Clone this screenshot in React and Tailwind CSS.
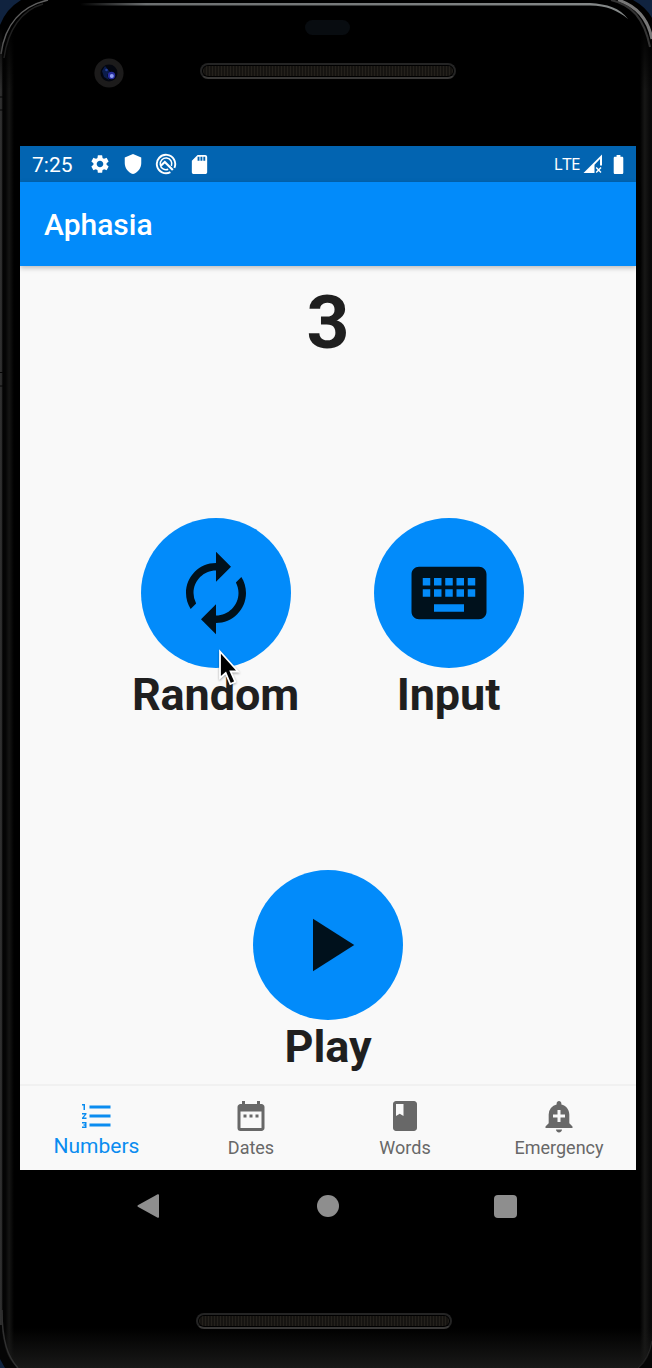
import React from "react";
import {
  MdSettings,
  MdShield,
  MdSdCard,
  MdBatteryFull,
  MdAutorenew,
  MdKeyboard,
  MdPlayArrow,
  MdFormatListNumbered,
  MdDateRange,
  MdBook,
  MdAddAlert,
} from "react-icons/md";

function Speaker() {
  return (
    <div className="h-4 w-[256px] rounded-full border-2 border-[#242424] border-b-[#3a3938] bg-black p-px">
      <div className="h-full w-full rounded-full bg-[repeating-linear-gradient(90deg,#24211c_0px,#24211c_1px,#161411_1px,#161411_3px)]" />
    </div>
  );
}

function Camera() {
  return (
    <svg className="h-[30px] w-[30px]" viewBox="0 0 30 30">
      <circle cx="15" cy="15" r="14.6" fill="#1c1b1b" />
      <circle cx="15" cy="15" r="8.5" fill="#03060f" />
      <path d="M11 8l5 6-3 3 2 5-5-3-2-6z" fill="#0b1c4a" />
      <circle cx="12.5" cy="12" r="1.3" fill="#25419a" />
      <circle cx="17.5" cy="17.5" r="3.7" fill="#262c9c" />
      <circle cx="17.8" cy="18" r="2" fill="#8e9df0" />
    </svg>
  );
}

function SyncBadge() {
  return (
    <svg className="h-[22px] w-[22px]" viewBox="0 0 22 22" fill="none" stroke="white">
      <path d="M15.4 19.1A9.2 9.2 0 1 1 19.4 14.8" strokeWidth="1.9" />
      <path d="M13.2 16.200A5.800 5.800 0 1 1 16.400 13" strokeWidth="1.500" />
      <path d="M5.800 12.800L9.800 9L17.800 17" strokeWidth="2.200" />
    </svg>
  );
}

function Signal() {
  return (
    <svg className="h-5 w-5" viewBox="0 0 20 20">
      <path d="M.5 19L19 .5v11h-2V5L11.5 10.7V19z" fill="white" />
      <path d="M13.2 13.6l4.8 4.8m0-4.8l-4.8 4.8" stroke="white" strokeWidth="1.4" />
    </svg>
  );
}

function ActionButton({ icon: Icon, label }) {
  return (
    <button className="flex w-[168px] flex-col items-center text-[#1f1f1f]">
      <span className="flex h-[150px] w-[150px] items-center justify-center rounded-full bg-[#028bfa] text-[#00111c]">
        <Icon className="h-[90px] w-[90px]" />
      </span>
      <span className="text-[45px] leading-[53px] font-bold tracking-[-0.1px]">{label}</span>
    </button>
  );
}

function Tab({ icon: Icon, label, active }) {
  return (
    <button
      className={
        active
          ? "flex w-[154px] flex-col items-center pr-px text-[#0a8cf0]"
          : "flex w-[154px] flex-col items-center text-[#686868]"
      }
    >
      <Icon className="h-9 w-9" />
      <span className={active ? "text-[21px] leading-[25px]" : "text-[18px] leading-[28px]"}>{label}</span>
    </button>
  );
}

export default function App() {
  return (
    <div className="h-[1368px] w-[652px] overflow-hidden bg-black font-['Roboto',sans-serif]">
      <div className="relative flex h-[1368px] flex-col overflow-hidden">
        {/* Metal rim and the light it catches */}
        <svg className="pointer-events-none absolute inset-0 h-full w-full" viewBox="0 0 652 1368" fill="none">
          <defs>
            <linearGradient id="base" x1="0" y1="1328" x2="0" y2="1368" gradientUnits="userSpaceOnUse">
              <stop offset="0" stopColor="#191918" stopOpacity="0" />
              <stop offset="1" stopColor="#191918" />
            </linearGradient>
            <linearGradient id="left" x1="0" y1="0" x2="14" y2="0" gradientUnits="userSpaceOnUse">
              <stop offset="0" stopColor="#323232" />
              <stop offset=".13" stopColor="#292929" />
              <stop offset=".2" stopColor="#030303" />
              <stop offset=".4" stopColor="#050505" />
              <stop offset=".65" stopColor="#151514" />
              <stop offset="1" stopColor="#000000" />
            </linearGradient>
            <linearGradient id="right" x1="640" y1="0" x2="652" y2="0" gradientUnits="userSpaceOnUse">
              <stop offset="0" stopColor="#000000" />
              <stop offset=".4" stopColor="#171716" />
              <stop offset=".8" stopColor="#090909" />
              <stop offset="1" stopColor="#080808" />
            </linearGradient>
            <linearGradient id="fadeTop" x1="0" y1="28" x2="0" y2="90" gradientUnits="userSpaceOnUse">
              <stop offset="0" stopColor="#000000" />
              <stop offset="1" stopColor="#000000" stopOpacity="0" />
            </linearGradient>
            <linearGradient id="top" x1="80" y1="0" x2="628" y2="0" gradientUnits="userSpaceOnUse">
              <stop offset="0" stopColor="#000000" />
              <stop offset=".12" stopColor="#6c6f70" />
              <stop offset="1" stopColor="#858989" />
            </linearGradient>
            <linearGradient id="rim" x1="0" y1="0" x2="0" y2="70" gradientUnits="userSpaceOnUse">
              <stop offset="0" stopColor="#606060" />
              <stop offset=".6" stopColor="#5a5a5a" />
              <stop offset="1" stopColor="#222222" />
            </linearGradient>
          </defs>
          <path d="M0 28h14v1340H0z" fill="url(#left)" />
          <path d="M640 28h12v1340h-12z" fill="url(#right)" />
          <path d="M0 28h14v62H0zM640 28h12v62h-12z" fill="url(#fadeTop)" />
          <path d="M0 1328h652v40H0z" fill="url(#base)" />
          <path d="M0 0H21Q6 9 0 25zM652 0H633Q646 7 652 18z" fill="#10233f" />
          <path d="M1 54C5 24 22 6 48 0" stroke="url(#rim)" strokeWidth="1.5" />
          <path d="M4 58C8 29 22 10 43 4" stroke="#202020" strokeWidth="1.5" />
          <path d="M618 0C637 6 648 19 652 39" stroke="#777777" strokeWidth="3" />
          <path d="M611 0C632 5 644 18 650 47" stroke="#343434" strokeWidth="2" />
          <path d="M80 3H590C607 4 620 8 628 19C617 10 607 6 590 5.5H80z" fill="url(#top)" />
          <path d="M2 1325C2 1345 7 1358 17 1368H0V1325z" fill="#050505" />
          <path d="M2 1310C2 1342 8 1357 18 1368" stroke="#303030" strokeWidth="1.5" />
          <path d="M652 1345Q649 1360 639 1368H652z" fill="#050505" />
          <path d="M652 1341Q649 1358 638 1368" stroke="#242424" />
          <path d="M0 1359L5 1368H0z" fill="#10233f" />
          <path d="M0 97h3M0 110h3M0 372.500h3M0 386h3" stroke="#050505" />
        </svg>

        <div className="flex h-[146px] shrink-0 flex-col pt-5">
          <div className="ml-[305px] h-[15px] w-[45px] rounded-full bg-[#080c10]" />
          <div className="mt-[23px] flex pl-[94px]">
            <Camera />
            <div className="ml-[76px] pt-[5px]">
              <Speaker />
            </div>
          </div>
        </div>

        <div className="relative ml-5 flex h-[1024px] w-[616px] shrink-0 flex-col bg-[#f9f9f9]">
          <div className="flex h-9 items-center bg-[#0264b1] pr-[6px] pl-3 text-white">
            <span className="w-[57px] pt-px text-[21px] leading-9">7:25</span>
            <MdSettings className="h-[22px] w-[22px]" />
            <MdShield className="ml-[11px] h-[22px] w-[22px]" />
            <span className="ml-[11px]">
              <SyncBadge />
            </span>
            <MdSdCard className="ml-[11px] h-[23px] w-[23px]" />
            <span className="ml-auto font-['Open_Sans'] text-[17px] leading-9 tracking-[-0.5px]">LTE</span>
            <span className="ml-[3px]">
              <Signal />
            </span>
            <MdBatteryFull className="ml-[4px] h-[23px] w-[23px]" />
          </div>
          <header className="relative flex h-[84px] items-center bg-[#028bfa] pl-6 text-[30px] font-medium text-white shadow-[0_2px_5px_rgba(0,0,0,0.25)]">
            Aphasia
          </header>

          <main className="flex h-[818px] flex-col items-center">
            <div className="mt-3 text-[75px] leading-[88px] font-bold text-[#1f1f1f]">3</div>
            <div className="mt-[152px] flex gap-[65px] pl-[8px]">
              <ActionButton icon={MdAutorenew} label="Random" />
              <ActionButton icon={MdKeyboard} label="Input" />
            </div>
            <div className="mt-[149px]">
              <ActionButton icon={MdPlayArrow} label="Play" />
            </div>
          </main>

          <nav className="flex h-[86px] border-t-2 border-[#f1f1f1] pt-3">
            <Tab icon={MdFormatListNumbered} label="Numbers" active />
            <Tab icon={MdDateRange} label="Dates" />
            <Tab icon={MdBook} label="Words" />
            <Tab icon={MdAddAlert} label="Emergency" />
          </nav>

          <svg
            className="absolute top-[502px] left-[196px] h-[42px] w-[28px] drop-shadow-[0_1px_1px_rgba(0,0,0,0.35)]"
            viewBox="0 0 28 42"
          >
            <path
              d="M4 3.500V30l5.700-5L14.300 36l5-2.200L14.600 23.500H22z"
              fill="black"
              stroke="white"
              strokeWidth="1.800"
            />
          </svg>
        </div>

        <div className="relative flex h-[72px] shrink-0 items-center pl-[137px] text-[#8e8e8e]">
          <svg className="h-6 w-[22px]" viewBox="0 0 22 24" fill="currentColor">
            <path d="M.8 11.200L20.700.2Q22 0 22 1v22q0 1-1.300.7L.8 12.800q-.8-.8 0-1.600z" />
          </svg>
          <div className="ml-[158px] h-[22px] w-[22px] rounded-full bg-[#8e8e8e]" />
          <div className="ml-[155px] h-[23px] w-[23px] rounded-sm bg-[#8e8e8e]" />
        </div>
        <div className="relative mt-[71px] ml-[196px]">
          <Speaker />
        </div>
      </div>
    </div>
  );
}
